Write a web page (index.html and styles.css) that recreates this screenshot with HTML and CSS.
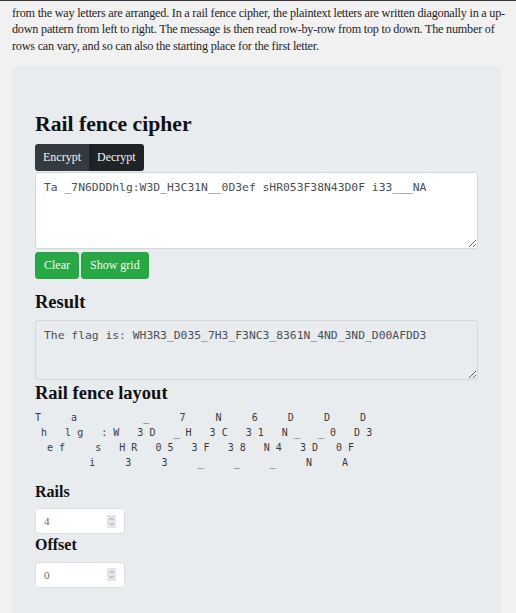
FILE: index.html
```html
<!DOCTYPE html>
<html lang="en">
<head>
<meta charset="utf-8">
<title>Rail fence cipher</title>
<link rel="stylesheet" href="styles.css">
</head>
<body>
<main class="page">
  <p class="intro">from the way letters are arranged. In a rail fence cipher, the plaintext letters are written diagonally in a up-<br>down pattern from left to right. The message is then read row-by-row from top to down. The number of<br>rows can vary, and so can also the starting place for the first letter.</p>

  <section class="card">
    <h1 class="title">Rail fence cipher</h1>
    <div class="btn-group">
      <button class="btn btn-dark">Encrypt</button>
      <button class="btn btn-dark active">Decrypt</button>
    </div>
    <textarea class="code-area input-area">Ta _7N6DDDhlg:W3D_H3C31N__0D3ef sHR053F38N43D0F i33___NA</textarea>
    <div class="actions">
      <button class="btn btn-green">Clear</button>
      <button class="btn btn-green">Show grid</button>
    </div>

    <h2 class="subtitle">Result</h2>
    <textarea class="code-area result-area" readonly>The flag is: WH3R3_D035_7H3_F3NC3_8361N_4ND_3ND_D00AFDD3</textarea>

    <h2 class="subtitle layout-title">Rail fence layout</h2>
<pre class="layout">T     a           _     7     N     6     D     D     D
 h   l g   : W   3 D   _ H   3 C   3 1   N _   _ 0   D 3
  e f     s   H R   0 5   3 F   3 8   N 4   3 D   0 F
         i     3     3     _     _     _     N     A</pre>

    <h3 class="label">Rails</h3>
    <div class="numbox">
      <input class="num-input" type="text" value="4">
      <span class="spin"><svg width="9" height="13" viewBox="0 0 9 13"><rect width="9" height="13" fill="#e4e4ea"/><path d="M2.5 5 L4.5 3 L6.5 5" fill="none" stroke="#8a8a92" stroke-width="0.8"/><path d="M2.5 8 L4.5 10 L6.5 8" fill="none" stroke="#8a8a92" stroke-width="0.8"/></svg></span>
    </div>
    <h3 class="label label-offset">Offset</h3>
    <div class="numbox">
      <input class="num-input" type="text" value="0">
      <span class="spin"><svg width="9" height="13" viewBox="0 0 9 13"><rect width="9" height="13" fill="#e4e4ea"/><path d="M2.5 5 L4.5 3 L6.5 5" fill="none" stroke="#8a8a92" stroke-width="0.8"/><path d="M2.5 8 L4.5 10 L6.5 8" fill="none" stroke="#8a8a92" stroke-width="0.8"/></svg></span>
    </div>
  </section>
</main>
</body>
</html>
```

FILE: styles.css
```css
html {
  overflow: hidden;
}

body {
  margin: 0;
  background: #f1f1f1;
  font-family: "Liberation Serif", serif;
  color: #212529;
  border-top: 1px solid #3a3a3a;
}

.page {
  padding: 0 15px 0 12px;
}

.intro {
  margin: 3.7px 0 0;
  font-size: 12.2px;
  letter-spacing: -0.22px;
  line-height: 16.7px;
  white-space: nowrap;
  color: #1e1e1e;
}

.card {
  margin-top: 11px;
  background: #e9ecef;
  padding: 46px 23px 30px;
}

.title {
  margin: 0 0 7px;
  font-size: 21.7px;
  line-height: 25.2px;
  font-weight: bold;
  color: #111;
}

.btn-group {
  display: flex;
}

.btn {
  font-family: "Liberation Serif", serif;
  font-size: 12px;
  height: 27px;
  cursor: pointer;
}

.btn-dark {
  background: #343a40;
  color: #f4f4f4;
  border: 0;
  padding: 0 8px;
}

.btn-dark:first-child {
  border-radius: 3px 0 0 3px;
}

.btn-dark:last-child {
  border-radius: 0 3px 3px 0;
}

.btn-dark.active {
  background: #1f2326;
}

.code-area {
  display: block;
  width: 100%;
  box-sizing: border-box;
  margin: 0;
  padding: 6px 8px;
  font-family: "DejaVu Sans Mono", monospace;
  font-size: 11.35px;
  line-height: 17px;
  color: #495057;
  border: 1px solid #d3d8dd;
  border-radius: 3px;
}

.input-area {
  margin-top: 1px;
  height: 77px;
  background: #fff;
}

.actions {
  display: flex;
  gap: 2px;
  margin-top: 3px;
}

.btn-green {
  background: #28a745;
  border: 1px solid #28a745;
  color: #f4fff6;
  border-radius: 3px;
  padding: 0 8px;
}

.subtitle {
  margin: 11.7px 0 7px;
  font-size: 18.5px;
  line-height: 22.2px;
  font-weight: bold;
  color: #111;
}

.result-area {
  height: 60px;
  background: #e9ecef;
}

.layout-title {
  margin: 2px 0 6px;
}

.layout {
  margin: 0;
  font-family: "DejaVu Sans Mono", monospace;
  font-size: 10px;
  line-height: 15px;
  color: #3a3a3a;
}

.label {
  margin: 12px 0 7px;
  font-size: 16px;
  line-height: 19.2px;
  font-weight: bold;
  color: #111;
}

.label-offset {
  margin-top: 1px;
}

.numbox {
  display: flex;
  align-items: center;
  box-sizing: border-box;
  width: 90px;
  height: 26px;
  padding: 0 8px;
  background: #fff;
  border: 1px solid #dde1e5;
  border-radius: 3px;
}

.num-input {
  flex: 1;
  min-width: 0;
  border: 0;
  padding: 0;
  background: transparent;
  font-family: "Liberation Serif", serif;
  font-size: 11px;
  color: #666;
  outline: none;
}

.spin {
  display: flex;
}
```
